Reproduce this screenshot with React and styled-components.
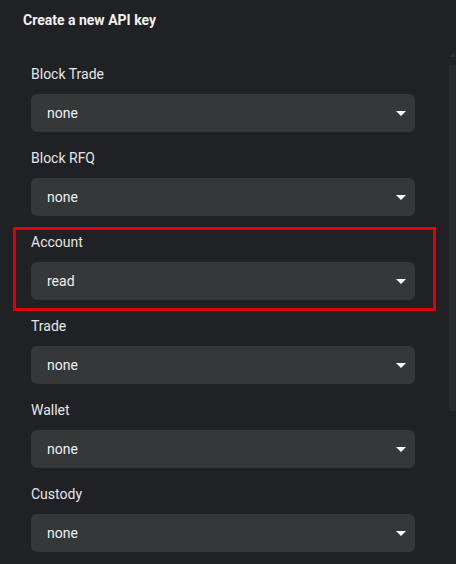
import React from "react";
import styled, { createGlobalStyle } from "styled-components";

const GlobalStyle = createGlobalStyle`
  html, body {
    margin: 0;
    padding: 0;
    background: #202124;
    font-family: Roboto, "Liberation Sans", sans-serif;
  }
`;

const fields = [
  { label: "Block Trade", value: "none" },
  { label: "Block RFQ", value: "none" },
  { label: "Account", value: "read", highlight: true },
  { label: "Trade", value: "none" },
  { label: "Wallet", value: "none" },
  { label: "Custody", value: "none" },
];

const App = () => {
  return (
    <Panel>
      <GlobalStyle />
      <Title>Create a new API key</Title>
      <Body>
        {fields.map((f) => (
          <Field key={f.label} $highlight={f.highlight}>
            <Label>{f.label}</Label>
            <Select>
              <span>{f.value}</span>
              <svg width="24" height="24" viewBox="0 0 24 24">
                <path d="M7 10l5 5 5-5z" fill="#ffffff" />
              </svg>
            </Select>
          </Field>
        ))}
      </Body>
      {/* scroll thumb of the body, drawn since the headless browser hides scrollbars */}
      <ScrollArrow />
      <ScrollThumb />
    </Panel>
  );
};

export default App;

const Panel = styled.div`
  position: relative;
  width: 456px;
  height: 564px;
  display: flex;
  flex-direction: column;
  background: #202124;
  overflow: hidden;
`;

const Title = styled.h2`
  margin: 0;
  padding: 11px 23px 0;
  height: 34px;
  box-sizing: border-box;
  font-size: 14px;
  font-weight: 700;
  line-height: 18px;
  color: #f2f2f2;
`;

const Body = styled.div`
  flex: 1;
  overflow: hidden;
  padding: 30px 34px 30px 31px;
  display: flex;
  flex-direction: column;
  gap: 16px;
`;

const Field = styled.div`
  position: relative;
  display: flex;
  flex-direction: column;
  gap: 10px;
  width: 384px;

  &::after {
    content: "";
    display: ${(p) => (p.$highlight ? "block" : "none")};
    position: absolute;
    top: -5px;
    left: -18px;
    right: -21px;
    bottom: -11px;
    border: 3px solid #e0000b;
    pointer-events: none;
  }
`;

const Label = styled.div`
  font-size: 14px;
  line-height: 20px;
  color: #e6e6e6;
`;

const Select = styled.div`
  height: 38px;
  border-radius: 6px;
  background: #363739;
  display: flex;
  align-items: center;
  justify-content: space-between;
  padding: 0 2px 0 16px;
  font-size: 14px;
  color: #efefef;

  svg {
    display: block;
  }
`;

const ScrollArrow = styled.div`
  position: absolute;
  top: 53px;
  right: 0;
  width: 0;
  height: 0;
  border-left: 4px solid transparent;
  border-right: 3px solid transparent;
  border-bottom: 4px solid #2d2e31;
`;

const ScrollThumb = styled.div`
  position: absolute;
  top: 65px;
  right: 0;
  width: 7px;
  height: 346px;
  background: #2a2b2e;
  border-radius: 3px 0 0 3px;
`;
